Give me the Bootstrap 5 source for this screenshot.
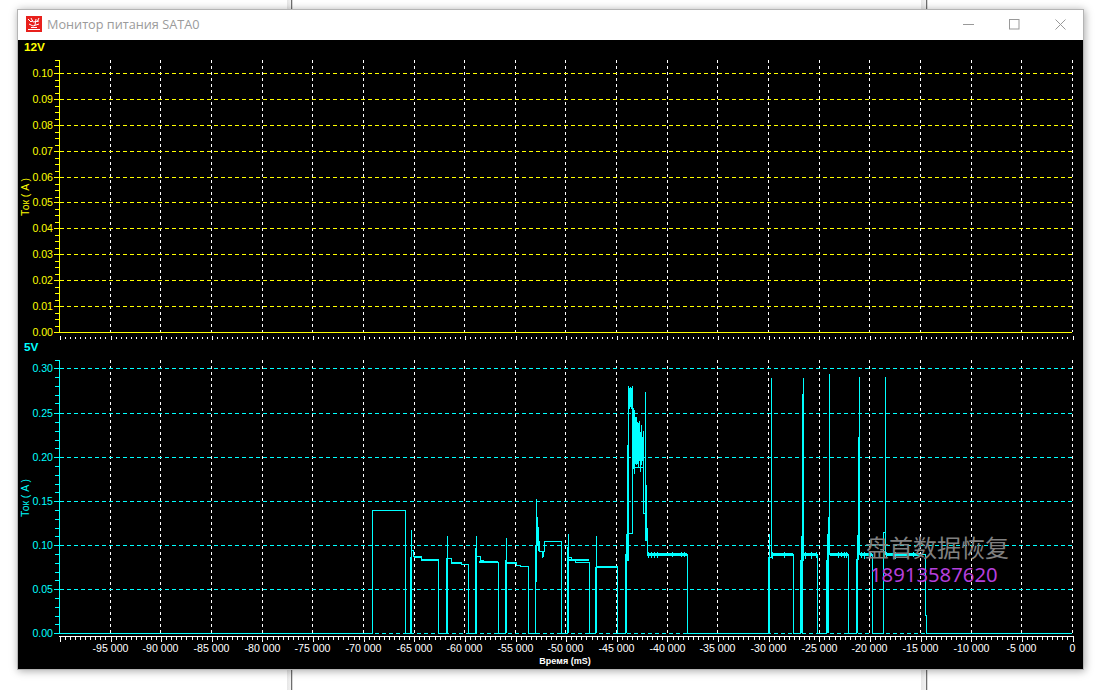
<!DOCTYPE html>
<html lang="ru">
<head>
<meta charset="utf-8">
<title>Монитор питания SATA0</title>
<link href="https://cdn.jsdelivr.net/npm/bootstrap@5.3.0/dist/css/bootstrap.min.css" rel="stylesheet">
<style>
html,body{height:100%;overflow:hidden}
body{
  background-color:#fff;
  background-image:
    linear-gradient(90deg,#e6e6e6 0,#f2f2f2 4px,#6e6e6e 4px,#6e6e6e 5px,#d8d8d8 5px),
    linear-gradient(90deg,#e6e6e6 0,#f2f2f2 5px,#6e6e6e 5px,#6e6e6e 6px,#d8d8d8 6px);
  background-repeat:no-repeat;
  background-size:6px 100%,7px 100%;
  background-position:287px 0,921px 0;
  padding:10px 0 0 18px;
}
.app-window{width:1065px;height:659px;box-shadow:0 0 0 1px #b4b4b4,1px 1px 8px 1px rgba(0,0,0,.35);background:#000}
.title-row{height:30px;background:#fff;padding-left:8px;flex:none}
.title-icon{margin-bottom:2px}
.title-label{font:12.7px "Open Sans","Liberation Sans",sans-serif;color:#9b9b9b;margin-left:5px;line-height:1;margin-bottom:1px}
.win-btns{margin-left:auto}
.win-btn{width:46px;height:30px;display:flex;align-items:center;justify-content:center;padding-bottom:2px}
.plot{display:block;background:#000}
.plot text{font-family:"Liberation Sans",Arial,sans-serif;font-size:10.6px}
.plot .volt{font-size:11.8px;font-weight:700}
.plot .axt{font-size:10.4px}
.plot .axb{font-size:9px;font-weight:700}
.plot .wm1{font-family:"Noto Sans CJK SC",sans-serif;font-size:24px;fill:#808080}
.plot .wm2{font-family:"Noto Sans","Open Sans",sans-serif;font-size:20.3px;fill:#b53fdc}
</style>
</head>
<body>
<div class="app-window d-flex flex-column">
  <div class="title-row d-flex align-items-center">
    <svg class="title-icon" width="16" height="16" viewBox="0 0 16 16" aria-hidden="true"><rect width="16" height="16" fill="#e8201c"/><path d="M2 3l3 3 2-2M5 2l2 4M9 9l1-6M7 6l6-1M13 2l-2 4M3 8l4 2 3-1 3-1" fill="none" stroke="#fff" stroke-width="1"/><path d="M5 11.5h6M2 13.5h12" stroke="#fff" stroke-width="1.2"/></svg>
    <span class="title-label">Монитор питания SATA0</span>
    <div class="win-btns d-flex">
      <div class="win-btn"><svg width="11" height="11" viewBox="0 0 11 11"><path d="M0 5.5h11" stroke="#999"/></svg></div>
      <div class="win-btn"><svg width="11" height="11" viewBox="0 0 11 11"><rect x=".5" y=".5" width="9.5" height="9.5" fill="none" stroke="#999"/></svg></div>
      <div class="win-btn"><svg width="11" height="11" viewBox="0 0 11 11"><path d="M.5.5l10 10M10.5.5l-10 10" stroke="#999"/></svg></div>
    </div>
  </div>
  <!-- viewBox uses screen coordinates: window interior starts at 18,40 -->
  <svg class="plot" width="1065" height="629" viewBox="18 40 1065 629" id="plot">
    <g id="grid" shape-rendering="crispEdges" fill="none"></g>
    <g fill="#ffff00">
      <text class="volt" x="24" y="51">12V</text>
      <text x="53" y="77" text-anchor="end">0.10</text><text x="53" y="103" text-anchor="end">0.09</text>
      <text x="53" y="129" text-anchor="end">0.08</text><text x="53" y="155" text-anchor="end">0.07</text>
      <text x="53" y="181" text-anchor="end">0.06</text><text x="53" y="206" text-anchor="end">0.05</text>
      <text x="53" y="232" text-anchor="end">0.04</text><text x="53" y="258" text-anchor="end">0.03</text>
      <text x="53" y="284" text-anchor="end">0.02</text><text x="53" y="310" text-anchor="end">0.01</text>
      <text x="53" y="336" text-anchor="end">0.00</text>
      <text class="axt" transform="translate(29 197) rotate(-90)" text-anchor="middle">Ток ( A )</text>
    </g>
    <g fill="#00ffff">
      <text class="volt" x="24" y="351">5V</text>
      <text x="53" y="372" text-anchor="end">0.30</text><text x="53" y="417" text-anchor="end">0.25</text>
      <text x="53" y="461" text-anchor="end">0.20</text><text x="53" y="505" text-anchor="end">0.15</text>
      <text x="53" y="549" text-anchor="end">0.10</text><text x="53" y="593" text-anchor="end">0.05</text>
      <text x="53" y="637" text-anchor="end">0.00</text>
      <text class="axt" transform="translate(29 498) rotate(-90)" text-anchor="middle">Ток ( A )</text>
    </g>
    <g fill="#fff" text-anchor="middle">
      <text x="110.5" y="652">-95 000</text><text x="160.5" y="652">-90 000</text><text x="211.5" y="652">-85 000</text>
      <text x="262.5" y="652">-80 000</text><text x="312.5" y="652">-75 000</text><text x="363.5" y="652">-70 000</text>
      <text x="414.5" y="652">-65 000</text><text x="464.5" y="652">-60 000</text><text x="515.5" y="652">-55 000</text>
      <text x="565.5" y="652">-50 000</text><text x="616.5" y="652">-45 000</text><text x="667.5" y="652">-40 000</text>
      <text x="717.5" y="652">-35 000</text><text x="768.5" y="652">-30 000</text><text x="819.5" y="652">-25 000</text>
      <text x="869.5" y="652">-20 000</text><text x="920.5" y="652">-15 000</text><text x="971.5" y="652">-10 000</text>
      <text x="1021.5" y="652">-5 000</text><text x="1072.5" y="652">0</text>
      <text class="axb" x="565" y="664">Время (mS)</text>
    </g>
    <g fill="none" stroke="#00ffff" shape-rendering="crispEdges">
      <path stroke-width="1" d="M59 633.5H372.5V510.5H405.5V633.5H410.5V557.5H411.5V529.5V550.5H413.5V556.5H421.5V559.5H438.5V633.5H446.5V558.5H447.5V535.5V558.5H451.5V562.5H461.5V564.5H468.5V633.5H475.5V548.5H476.5V535.5V556.5H480.5V560.5H483.5V562.5H498.5V633.5H505.5V560.5H506.5V537.5V562.5H516.5V565.5H520.5V566.5H528.5V633.5H535.5V545.5H536.5V498.5V581.5V540.5H537.5V516.5V545.5H538.5V526.5V550.5H539.5V540.5V551.5H542.5V557.5V551.5H544.5V541.5H561.5V633.5H567.5V547.5H568.5V533.5V557.5H571.5V559.5H575.5V562.5H589.5V633.5H595.5V567.5H596.5V535.5V566.5H617.5V633.5H625.5V554.5H626.5V534.5H627.5V444.5V560.5H628.5V385.5V533.5H632.5V513.5V408.5H633.5V467.5H643.5V430.5V513.5H645.5V391.5V540.5H646.5V484.5V540.5H647.5V527.5V554.5H687.5V633.5H768.5V557.5H769.5V533.5V557.5H771.5V377.5V554.5H793.5V633.5H800.5V560.5H801.5V535.5V560.5H802.5V394.5V560.5H803.5V377.5V554.5H817.5V633.5H826.5V560.5H827.5V533.5V560.5H828.5V516.5V554.5H829.5V373.5V554.5H848.5V633.5H856.5V559.5H857.5V534.5V559.5H858.5V436.5V554.5H859.5V376.5V554.5H872.5V633.5H883.5V532.5H885.5V376.5V554.5H925.5V615.5H926.5V633.5H1072"/>
      <path stroke-width="2" d="M411 633V557M447 633V558M476 633V548M506 633V560M536 581V545M543 557V551M568 633V547M596 633V567M626 633V554M628 560V445M769 633V557M802 633V560M802.5 560V394M828 633V560M857 633V559M414 557H421M421 560H438M451 563H461M479 562H498M507 563H516M569 560H589M597 567H617"/>
      <path stroke-width="3" d="M647 554.5H687M771 554.5H793M804 554.5H817M830 554.5H848M860 554.5H872M886 554.5H920"/>
      <path id="noise" stroke-width="1"/>
    </g>
    <text class="wm1" x="865" y="557">盘首数据恢复</text>
    <text class="wm2" x="870" y="582">18913587620</text>
  </svg>
</div>
<script src="https://cdn.jsdelivr.net/npm/bootstrap@5.3.0/dist/js/bootstrap.bundle.min.js"></script>
<script>
(function(){
  var xs=[110,160,211,262,312,363,414,464,515,565,616,667,717,768,819,869,920,971,1021,1072];
  var Y1=[73,99,125,151,177,202,228,254,280,306,332],Y2=[368,413,457,501,545,589,633];
  var NS='http://www.w3.org/2000/svg',g=document.getElementById('grid');
  function p(d,c,dash){var e=document.createElementNS(NS,'path');e.setAttribute('d',d);e.setAttribute('stroke',c);if(dash)e.setAttribute('stroke-dasharray',dash);g.appendChild(e);}
  var v='';xs.forEach(function(x){v+='M'+(x+.5)+' 60V332M'+(x+.5)+' 360V633';});p(v,'#fff','3 3');
  var h1='';Y1.slice(0,10).forEach(function(y){h1+='M60 '+(y+.5)+'H1072';});p(h1,'#ffff00','4 3');
  var h2='';Y2.forEach(function(y){h2+='M60 '+(y+.5)+'H1072';});p(h2,'#00ffff','4 3');
  var a='M59.5 60V332.5M54 332.5H1072';
  Y1.forEach(function(y,i){a+='M54 '+(y+.5)+'H59';if(i<10)for(var k=1;k<4;k++)a+='M55 '+(Math.round(y+k*6.5)+.5)+'H59';});
  a+='M55 60.5H59M55 66.5H59';p(a,'#ffff00');
  var b='M59.5 360V633.5M54 633.5H59';
  Y2.forEach(function(y,i){b+='M54 '+(y+.5)+'H59';if(i<6)for(var k=1;k<5;k++)b+='M55 '+(Math.round(y+k*44.2/5)+.5)+'H59';});
  b+='M55 360.5H59';p(b,'#00ffff');
  var t='M59 636.5H1073',d='';
  for(var i=0;i<=200;i++){var x=Math.round(1072.5-i*5.063)+.5;if(x<60)break;
    var maj=i%10==0;t+='M'+x+' 636V'+(maj?642:640);d+='M'+x+' '+(maj?336:337)+'V'+(maj?340:339);}
  p(t,'#fff');p(d,'#fff');
  var n='',s=7;function r(m){s=(s*9301+49297)%233280;return s/233280*m;}
  // dense oscillation burst
  for(var q=629.5;q<=632.5;q++)n+='M'+q+' '+(386+Math.round(r(5)))+'V'+(406+Math.round(r(5)));
  for(q=633.5;q<=643.5;q++){var f=(q-633.5)/10;n+='M'+q+' '+Math.round(403+f*24+r(12))+'.5V'+Math.round(463+r(13)-f*6)+'.5';}
  // small fuzz on plateaus
  [[648,687],[772,793],[805,817],[831,848],[861,872],[886,920]].forEach(function(z){
    for(var u=z[0];u<z[1];u+=2+Math.round(r(4))){if(r(1)>.45)n+='M'+(u+.5)+' 552V'+(557+Math.round(r(2)));}
  });
  document.getElementById('noise').setAttribute('d',n);
})();
</script>
</body>
</html>
